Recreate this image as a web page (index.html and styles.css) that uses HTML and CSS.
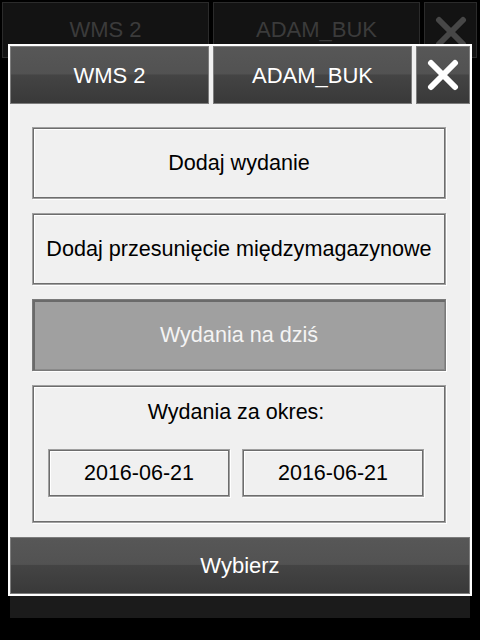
FILE: index.html
```html
<!DOCTYPE html>
<html>
<head>
<meta charset="utf-8">
<link rel="stylesheet" href="styles.css">
</head>
<body>
<div class="screen">
  <div class="bg-header">
    <div class="bg-tile wide">WMS 2</div>
    <div class="bg-tile wide">ADAM_BUK</div>
    <div class="bg-tile close">
      <svg class="x-icon" viewBox="0 0 32 32" width="32" height="32"><path d="M4 4L28 28M28 4L4 28" stroke="#474747" stroke-width="6" stroke-linecap="round" fill="none"/></svg>
    </div>
  </div>
  <div class="bg-strip"></div>
</div>

<div class="dialog">
  <div class="dlg-header">
    <div class="hbtn wide">WMS 2</div>
    <div class="hbtn wide">ADAM_BUK</div>
    <div class="hbtn close">
      <svg class="x-icon" viewBox="0 0 32 32" width="32" height="32"><path d="M4 4L28 28M28 4L4 28" stroke="#ffffff" stroke-width="6" stroke-linecap="round" fill="none"/></svg>
    </div>
  </div>
  <div class="dlg-body">
    <div class="btn">Dodaj wydanie</div>
    <div class="btn">Dodaj przesunięcie międzymagazynowe</div>
    <div class="btn disabled">Wydania na dziś</div>
    <div class="group">
      <div class="group-title">Wydania za okres:</div>
      <div class="dates">
        <div class="date">2016-06-21</div>
        <div class="date">2016-06-21</div>
      </div>
    </div>
  </div>
  <div class="dlg-footer">Wybierz</div>
</div>
</body>
</html>
```
FILE: styles.css
```css
* { box-sizing: border-box; }
html, body {
  margin: 0;
  padding: 0;
  background: #000;
  width: 480px;
  height: 640px;
  overflow: hidden;
  font-family: "Liberation Sans", Arial, sans-serif;
}
.screen {
  width: 480px;
  height: 640px;
  display: flex;
  flex-direction: column;
  justify-content: space-between;
}
.bg-header {
  display: flex;
  gap: 4px;
  padding: 2px 3px 0 2px;
}
.bg-tile {
  height: 56px;
  background: #131313;
  border: 1px solid #2b2b2b;
  color: #3b3b3b;
  font-size: 22px;
  display: flex;
  align-items: center;
  justify-content: center;
}
.bg-tile.wide { width: 207px; }
.bg-tile.close { flex: 1; align-items: flex-start; padding-top: 13px; }
.bg-strip {
  height: 23px;
  margin: 0 10px 22px 10px;
  background: #1b1b1b;
}
.dialog {
  position: absolute;
  left: 8px;
  top: 44px;
  width: 464px;
  height: 552px;
  border: 2px solid #ffffff;
  background: #f0f0f0;
  display: flex;
  flex-direction: column;
}
.dlg-header {
  display: flex;
  gap: 4px;
  height: 58px;
}
.hbtn, .dlg-footer {
  background: linear-gradient(#575757 0%, #525252 48%, #444444 50%, #393939 100%);
  border: 1px solid #7c7c7c;
  color: #ffffff;
  font-size: 22px;
  display: flex;
  align-items: center;
  justify-content: center;
  padding-top: 1px;
}
.hbtn.wide { width: 199px; }
.hbtn.close { flex: 1; padding-top: 0; }
.dlg-body {
  flex: 1;
  display: flex;
  flex-direction: column;
  gap: 14px;
  padding: 23px 24px 14px 22px;
}
.btn {
  height: 72px;
  border: 1px solid #a0a0a0;
  box-shadow: inset 1px 1px 0 #6d6d6d, inset -1px -1px 0 #6d6d6d, inset 2px 2px 0 #ffffff, 1px 1px 0 #ffffff;
  background: #f0f0f0;
  color: #000;
  font-size: 21.6px;
  display: flex;
  align-items: center;
  justify-content: center;
  white-space: nowrap;
}
.btn.disabled {
  background: #a0a0a0;
  color: #f4f4f4;
  border-color: #7a7a7a;
  box-shadow: inset 2px 2px 0 #6a6a6a, 1px 1px 0 #ffffff, inset -1px -1px 0 #8a8a8a;
}
.group {
  height: 138px;
  border: 1px solid #a0a0a0;
  box-shadow: inset 1px 1px 0 #6d6d6d, inset -1px -1px 0 #6d6d6d, inset 2px 2px 0 #ffffff, 1px 1px 0 #ffffff;
  padding: 0 21px 0 15px;
  display: flex;
  flex-direction: column;
}
.group-title {
  height: 51px;
  padding-top: 1px;
  font-size: 21.5px;
  color: #000;
  display: flex;
  align-items: center;
  justify-content: center;
}
.dates {
  margin-top: 12px;
  display: flex;
  gap: 12px;
}
.date {
  width: 182px;
  height: 48px;
  border: 1px solid #a0a0a0;
  box-shadow: inset 1px 1px 0 #6d6d6d, inset -1px -1px 0 #6d6d6d, inset 2px 2px 0 #ffffff, 1px 1px 0 #ffffff;
  font-size: 21.5px;
  color: #000;
  display: flex;
  align-items: center;
  justify-content: center;
}
.dlg-footer {
  height: 57px;
}
.x-icon { display: block; }
```
